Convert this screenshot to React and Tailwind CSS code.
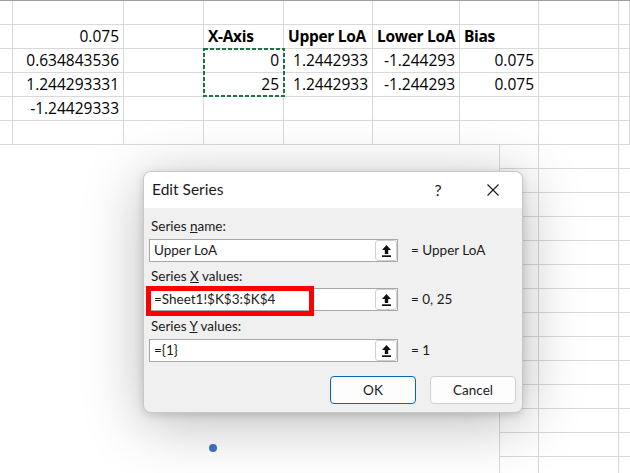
const cols = ["w-[13px]", "w-[111px]", "w-[80px]", "w-[80px]", "w-[89px]", "w-[87px]", "w-[79px]", "w-[80px]", "w-[11px]"];

const rows = [
  ["", "", "", "", "", "", "", "", ""],
  ["", "0.075", "", "X-Axis", "Upper LoA", "Lower LoA", "Bias", "", ""],
  ["", "0.634843536", "", "0", "1.2442933", "-1.244293", "0.075", "", ""],
  ["", "1.244293331", "", "25", "1.2442933", "-1.244293", "0.075", "", ""],
  ["", "-1.24429333", "", "", "", "", "", "", ""],
  ["", "", "", "", "", "", "", "", ""],
];

const Cell = ({ w, text, header }) => (
  <div
    className={`${w} h-[24px] shrink-0 border-r border-b border-[#d9d9d9] flex items-end pb-[2px] px-[4px] text-[15.5px] leading-[19px] text-black whitespace-nowrap ${header ? "font-bold justify-start tracking-[-0.3px]" : "justify-end"}`}
    style={{ fontFamily: "'Open Sans', Lato, sans-serif" }}
  >
    {text}
  </div>
);

const UploadBtn = () => (
  <div className="w-[22px] h-full shrink-0 bg-white border border-[#cfcfcf] rounded-[3px] flex items-center justify-center">
    <svg width="9" height="12" viewBox="0 0 9 12">
      <path d="M4.5 0 L9 5 H6.2 V9 H2.8 V5 H0 Z" fill="#111" />
      <rect x="0" y="10.3" width="9" height="1.7" fill="#111" />
    </svg>
  </div>
);

const Field = ({ value, result, highlight }) => (
  <div className="flex items-center">
    <div className="relative w-[249px] h-[23px] bg-white border border-[#a8a8a8] flex items-stretch">
      <div className="flex-1 pl-[4px] text-[13.5px] leading-[21px] text-[#1a1a1a]">{value}</div>
      <div className="flex">
        <UploadBtn />
      </div>
      {highlight && (
        <div className="absolute left-[-4px] top-[-3px] w-[168px] h-[30px] border-[5px] border-[#ff0000]" />
      )}
    </div>
    <div className="ml-[13px] text-[13.5px] text-[#1a1a1a]">{result}</div>
  </div>
);

export default function App() {
  return (
    <div
      className="relative w-[630px] h-[473px] overflow-hidden bg-white"
      style={{ fontFamily: "Lato, 'Noto Sans', sans-serif" }}
    >
      <div className="border-t border-[#9e9e9e]">
        {rows.map((r, i) => (
          <div key={i} className="flex">
            {r.map((t, j) => (
              <Cell key={j} w={cols[j]} text={t} header={i === 1 && j >= 3 && j <= 6} />
            ))}
          </div>
        ))}
        <div className="flex h-[330px]">
          <div className="w-[500px] h-full bg-white border-r border-[#d9d9d9] relative">
            <div className="absolute left-[209px] top-[299px] w-[8px] h-[8px] rounded-full bg-[#4472c4]" />
          </div>
          <div className="flex flex-col">
            {Array.from({ length: 14 }).map((_, i) => (
              <div key={i} className="flex">
                <div className="w-[39px] h-[24px] border-r border-b border-[#d9d9d9]" />
                <div className="w-[80px] h-[24px] border-r border-b border-[#d9d9d9]" />
                <div className="w-[11px] h-[24px] border-b border-[#d9d9d9]" />
              </div>
            ))}
          </div>
        </div>
      </div>

      {/* marching ants around K3:K4 */}
      <svg className="absolute left-[203px] top-[48px]" width="82" height="49">
        <rect x="1" y="1" width="80" height="47" fill="none" stroke="#217346" strokeWidth="2" strokeDasharray="4 2" />
      </svg>

      {/* Edit Series dialog */}
      <div className="absolute left-[143px] top-[171px] w-[380px] h-[242px] rounded-[8px] border border-[#c8c8c8] bg-[#f0f0f0] overflow-hidden shadow-[0_10px_60px_rgba(0,0,0,0.28),0_2px_8px_rgba(0,0,0,0.15)]">
        <div className="h-[36px] bg-white flex items-center pl-[8px] text-[#1a1a1a]">
          <div className="text-[15.5px] flex-1">Edit Series</div>
          <div className="text-[16px] w-[20px] text-center mr-[39px]">?</div>
          <svg width="12" height="12" viewBox="0 0 12 12" className="mr-[23px]">
            <path d="M0.5 0.5 L11.5 11.5 M11.5 0.5 L0.5 11.5" stroke="#1a1a1a" strokeWidth="1.1" />
          </svg>
        </div>
        <div className="px-[5px] text-[13.5px] text-[#1a1a1a]">
          <div className="mt-[9px] h-[18px] leading-[18px] pl-[2px]">
            Series <span className="underline">n</span>ame:
          </div>
          <div className="mt-[4px]">
            <Field value="Upper LoA" result="= Upper LoA" />
          </div>
          <div className="mt-[5px] h-[18px] leading-[18px] pl-[2px]">
            Series <span className="underline">X</span> values:
          </div>
          <div className="mt-[3px]">
            <Field value="=Sheet1!$K$3:$K$4" result="= 0, 25" highlight />
          </div>
          <div className="mt-[6px] h-[18px] leading-[18px] pl-[2px]">
            Series <span className="underline">Y</span> values:
          </div>
          <div className="mt-[4px]">
            <Field value="={1}" result="= 1" />
          </div>
          <div className="mt-[14px] flex justify-end gap-[14px] pr-[1px]">
            <button className="w-[86px] h-[28px] bg-[#fdfdfd] border border-[#0067c0] rounded-[4px] text-[13.5px] text-[#1a1a1a]">
              OK
            </button>
            <button className="w-[86px] h-[28px] bg-[#fdfdfd] border border-[#d0d0d0] rounded-[4px] text-[13.5px] text-[#1a1a1a]">
              Cancel
            </button>
          </div>
        </div>
      </div>
    </div>
  );
}
